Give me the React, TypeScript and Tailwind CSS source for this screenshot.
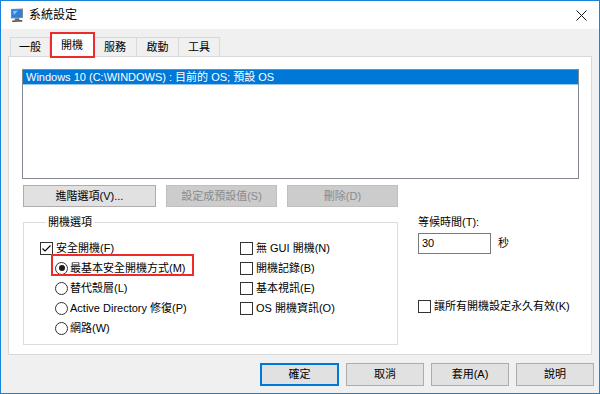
import React from 'react';

const font = "font-['Liberation_Sans','Noto_Sans_CJK_TC',sans-serif]";

const CheckBox = ({ checked = false }: { checked?: boolean }) => (
  <span className="w-[13px] h-[13px] border border-[#333333] bg-white flex items-center justify-center shrink-0">
    {checked ? (
      <svg width="11" height="11" viewBox="0 0 11 11">
        <path d="M1.5 5.5 L4 8 L9.5 2.5" fill="none" stroke="#000" strokeWidth="1.1" />
      </svg>
    ) : null}
  </span>
);

const Radio = ({ checked = false }: { checked?: boolean }) => (
  <span className="w-[13px] h-[13px] rounded-full border border-[#333333] bg-white flex items-center justify-center shrink-0">
    {checked ? <span className="w-[6px] h-[6px] rounded-full bg-[#1a1a1a]" /> : null}
  </span>
);

interface BtnProps {
  label: string;
  width: string;
  disabled?: boolean;
  primary?: boolean;
}

const Button = ({ label, width, disabled, primary }: BtnProps) => {
  let cls = 'bg-[#e1e1e1] border border-[#adadad] text-black';
  if (disabled) cls = 'bg-[#cccccc] border border-[#bfbfbf] text-[#8a8a8a]';
  if (primary) cls = 'bg-[#e1e1e1] border-2 border-[#0078d7] text-black';
  return (
    <div className={`${width} h-full flex items-center justify-center leading-[15px] ${cls}`}>{label}</div>
  );
};

const tabs = ['一般', '開機', '服務', '啟動', '工具'];
const tabWidths = ['w-[40px]', 'w-[44px]', 'w-[44px]', 'w-[43px]', 'w-[42px]'];

export default function App() {
  return (
    <div className={`w-[600px] h-[394px] border border-[#1883d7] flex flex-col bg-[#f0f0f0] text-[11px] text-black ${font}`}>
      {/* title bar */}
      <div className="h-[28px] bg-white flex items-center shrink-0">
        <svg width="16" height="16" viewBox="0 0 16 16" className="ml-[8px]">
          <path d="M2 2 L14 1.5 L14 11 L2 11.5 Z" fill="#7c8a99" />
          <path d="M3 3 L13 2.6 L13 10 L3 10.4 Z" fill="#2f7fd8" />
          <path d="M4 4 L9 3.8 L5 8 Z" fill="#8cc4f5" />
          <path d="M6 11.5 L10 11.3 L10.5 13 L5.5 13.2 Z" fill="#5d6670" />
          <path d="M3.5 13.5 L13 13 L13.5 14.5 L3 15 Z" fill="#3f4750" />
        </svg>
        <span className="ml-[4px] text-[12px] leading-[16px]">系統設定</span>
        <svg width="11" height="11" viewBox="0 0 11 11" className="ml-auto mr-[12px]">
          <path d="M0.5 0.5 L10.5 10.5 M10.5 0.5 L0.5 10.5" stroke="#111" strokeWidth="1" />
        </svg>
      </div>

      {/* body */}
      <div className="flex-1 flex flex-col px-[7px] pt-[4px]">
        {/* tabs */}
        <div className="h-[23px] flex items-end pl-[2px] shrink-0">
          {tabs.map((t, i) =>
            i === 1 ? (
              <div
                key={t}
                className={`${tabWidths[i]} relative z-10 -mb-px h-[24px] bg-white border border-b-0 border-[#d9d9d9] flex items-center justify-center leading-[15px]`}
              >
                {t}
                <span className="absolute -top-[2px] -left-[1px] -right-[2px] -bottom-[1px] border-2 border-[#ee2b2b]" />
              </div>
            ) : (
              <div
                key={t}
                className={`${tabWidths[i]} h-[19px] bg-[#f0f0f0] border border-b-0 border-[#d9d9d9] -ml-px first:ml-0 flex items-center justify-center leading-[15px]`}
              >
                {t}
              </div>
            ),
          )}
        </div>

        {/* tab panel */}
        <div className="h-[299px] bg-white border border-[#d9d9d9] pt-[12px] pl-[13px] shrink-0">
          <div className="w-[557px] h-[110px] border border-[#828790] bg-white">
            <div className="h-[15px] bg-[#0078d7] border-b border-[#99c9ef] text-white leading-[14px] pl-[3px]">
              Windows 10 (C:\WINDOWS) : 目前的 OS; 預設 OS
            </div>
          </div>

          <div className="flex h-[22px] mt-[6px] ml-[1px] gap-[10px]">
            <Button label="進階選項(V)..." width="w-[133px]" />
            <Button label="設定成預設值(S)" width="w-[111px]" disabled />
            <Button label="刪除(D)" width="w-[111px]" disabled />
          </div>

          <div className="flex mt-[8px] ml-[1px]">
            <fieldset className="w-[375px] h-[130px] border border-[#dcdcdc] pl-[16px]">
              <legend className="ml-[6px] px-[2px] leading-[15px]">開機選項</legend>
              <div className="flex pt-[8px]">
                <div className="w-[200px] flex flex-col">
                  <div className="h-[20px] flex items-center gap-[3px]">
                    <CheckBox checked />
                    <span>安全開機(F)</span>
                  </div>
                  <div className="h-[20px] flex items-center pl-[15px]">
                    <div className="relative flex items-center gap-[2px]">
                      <Radio checked />
                      <span>最基本安全開機方式(M)</span>
                      <span className="absolute -top-[6px] -left-[4px] w-[143px] h-[22px] border-2 border-[#ee2b2b]" />
                    </div>
                  </div>
                  <div className="h-[20px] flex items-center pl-[15px] gap-[2px]">
                    <Radio />
                    <span>替代殼層(L)</span>
                  </div>
                  <div className="h-[20px] flex items-center pl-[15px] gap-[2px]">
                    <Radio />
                    <span>Active Directory 修復(P)</span>
                  </div>
                  <div className="h-[20px] flex items-center pl-[15px] gap-[2px]">
                    <Radio />
                    <span>網路(W)</span>
                  </div>
                </div>
                <div className="flex flex-col">
                  {['無 GUI 開機(N)', '開機記錄(B)', '基本視訊(E)', 'OS 開機資訊(O)'].map((s) => (
                    <div key={s} className="h-[20px] flex items-center gap-[3px]">
                      <CheckBox />
                      <span>{s}</span>
                    </div>
                  ))}
                </div>
              </div>
            </fieldset>

            <div className="ml-[20px] flex flex-col">
              <div className="h-[15px] leading-[15px]">等候時間(T):</div>
              <div className="flex items-center mt-[3px]">
                <div className="w-[73px] h-[21px] border border-[#7a7a7a] bg-white flex items-center pl-[3px]">30</div>
                <span className="ml-[7px]">秒</span>
              </div>
              <div className="h-[20px] flex items-center gap-[3px] mt-[42px]">
                <CheckBox />
                <span>讓所有開機設定永久有效(K)</span>
              </div>
            </div>
          </div>
        </div>

        {/* bottom buttons */}
        <div className="flex justify-end h-[23px] mt-[8px] -mr-[2px] gap-[7px]">
          <Button label="確定" width="w-[79px]" primary />
          <Button label="取消" width="w-[78px]" />
          <Button label="套用(A)" width="w-[78px]" />
          <Button label="說明" width="w-[78px]" />
        </div>
      </div>
    </div>
  );
}
